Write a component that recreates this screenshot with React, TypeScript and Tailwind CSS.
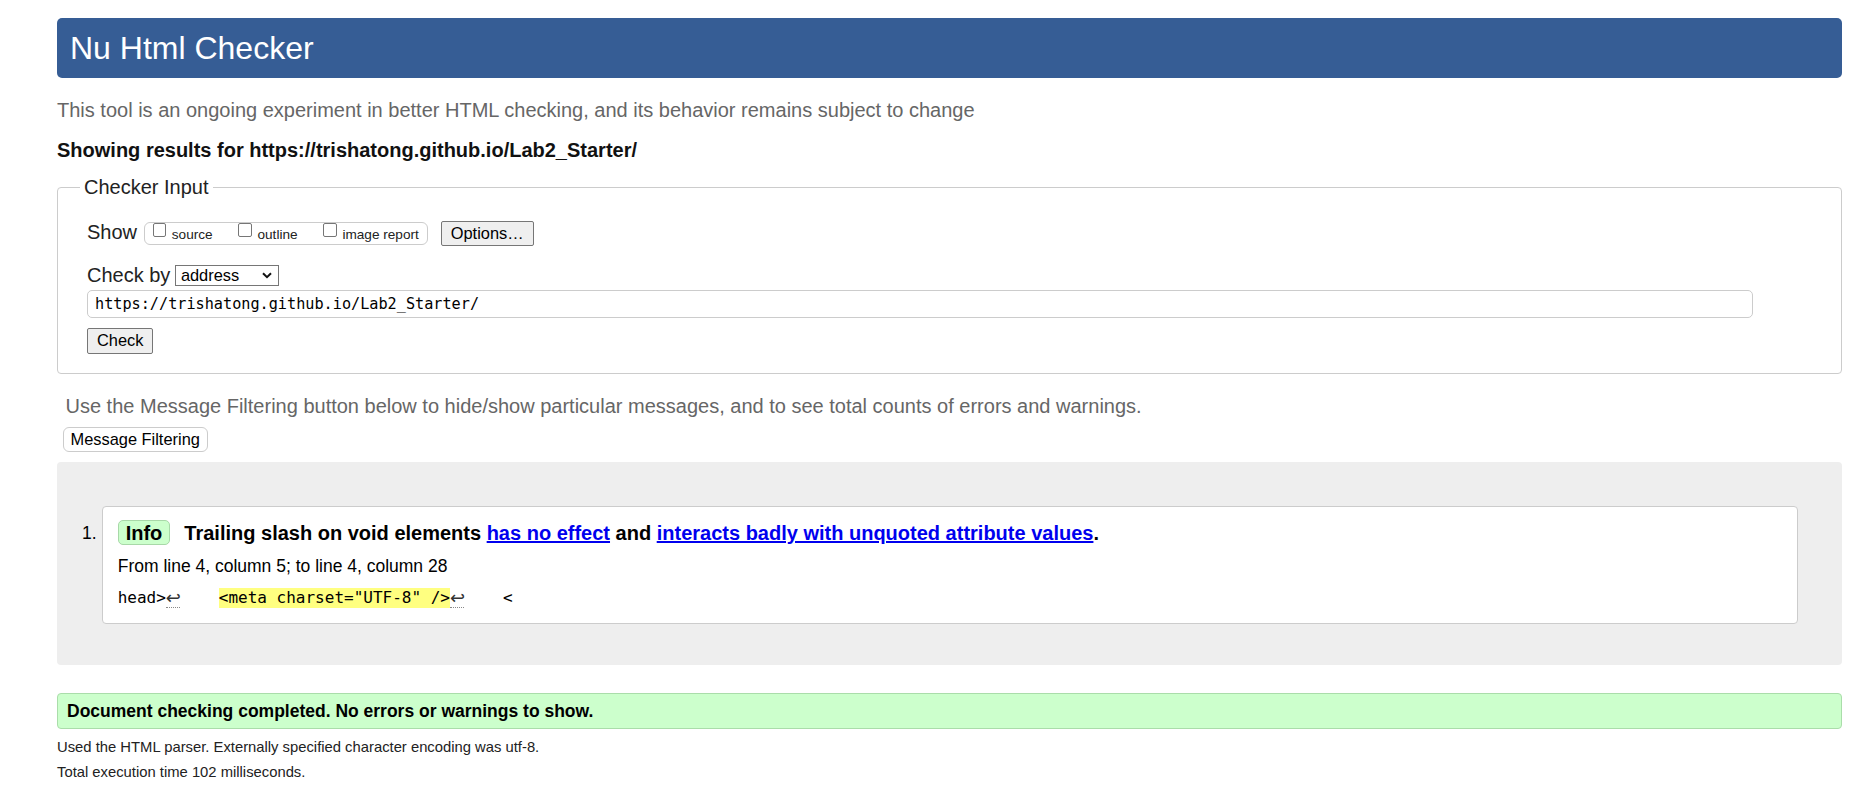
import React from "react";

function Checkbox({ label }: { label: string }) {
  return (
    <label className="flex items-start">
      <input
        type="checkbox"
        className="m-0 h-[13.7px] w-[13.7px] appearance-none rounded-[2px] border border-[#767676] bg-white"
      />
      <span className="ml-[5.6px] mt-[1.5px] text-[13.6px] leading-[20px] text-[#222]">{label}</span>
    </label>
  );
}

function Ret() {
  return (
    <span className="inline-block h-[20px] w-[14.4px] border-b border-dotted border-[#888] text-center font-['DejaVu_Sans',sans-serif] text-[18px] leading-[20px] text-[#333]">
      ↩
    </span>
  );
}

export default function App() {
  return (
    <div className="min-h-[787px] bg-white pl-[57px] pr-[20px] pt-[18px] font-['Liberation_Sans','Arial',sans-serif] text-black">
      <header className="h-[60px] rounded-[5px] bg-[#365d95] pl-[13px] text-[32px] leading-[60px] text-white">
        Nu Html Checker
      </header>

      <p className="mt-[20px] text-[20px] leading-[24px] text-[#666]">
        This tool is an ongoing experiment in better HTML checking, and its behavior remains subject to change
      </p>
      <p className="mt-[16px] text-[20px] font-bold leading-[24px] text-[#111]">
        Showing results for https://trishatong.github.io/Lab2_Starter/
      </p>

      <fieldset className="mt-[13px] rounded-[4px] border border-[#ccc] pb-[19px] pl-[22px] pt-[21.6px]">
        <legend className="px-[4px] text-[20px] leading-[24px] text-[#222]">Checker Input</legend>
        <div className="pl-[7px]">
          <div className="flex h-[26px] items-center">
            <span className="mb-[3px] text-[20px] leading-[23px] text-[#222]">Show</span>
            <div className="ml-[6.5px] flex h-[23px] items-start gap-[25.6px] rounded-[6px] border border-[#ccc] px-[8px]">
              <Checkbox label="source" />
              <Checkbox label="outline" />
              <Checkbox label="image report" />
            </div>
            <button className="ml-[13px] h-[25px] rounded-[2px] border border-[#767676] bg-[#efefef] px-[9px] text-[16.4px] leading-[23px] text-black">
              Options…
            </button>
          </div>

          <div className="mt-[16px] flex items-start">
            <span className="text-[20px] leading-[24px] text-[#222]">Check by</span>
            <div className="relative ml-[4.5px] mt-[2px]">
              <select className="block h-[21.7px] w-[104px] appearance-none rounded-none border border-[#767676] bg-white py-0 pl-[5px] text-[16.4px] leading-[19px] text-black">
                <option>address</option>
              </select>
              <svg
                className="pointer-events-none absolute right-[6.5px] top-[7.5px]"
                width="10"
                height="7"
                viewBox="0 0 10 7"
              >
                <path d="M1 1.2 L5 5.2 L9 1.2" fill="none" stroke="#111" strokeWidth="2" />
              </svg>
            </div>
          </div>

          <input
            readOnly
            value="https://trishatong.github.io/Lab2_Starter/"
            className="mt-[3px] block h-[28px] w-[1666px] rounded-[5px] border border-[#ccc] bg-white pl-[7px] font-['DejaVu_Sans_Mono',monospace] text-[15.2px] text-black outline-none"
          />

          <button className="mt-[10px] block h-[26px] rounded-[2px] border border-[#767676] bg-[#efefef] px-[9px] text-[16.4px] leading-[23px] text-black">
            Check
          </button>
        </div>
      </fieldset>

      <p className="mt-[20px] pl-[8.5px] text-[20px] leading-[24px] text-[#666]">
        Use the Message Filtering button below to hide/show particular messages, and to see total counts of errors and warnings.
      </p>
      <div className="mt-[9px] pl-[5.5px]">
        <button className="h-[25px] rounded-[6px] border border-[#ccc] bg-white px-[7px] text-[16.4px] leading-[23px] text-black">
          Message Filtering
        </button>
      </div>

      <div className="mt-[10px] rounded-[4px] bg-[#eeeeee] pb-[41.6px] pl-[25px] pr-[44px] pt-[44px]">
        <div className="flex items-start">
          <span className="mt-[15.6px] w-[19.7px] shrink-0 text-[17.5px] leading-[25px]">1.</span>
          <div className="flex-1 rounded-[4px] border border-[#ccc] bg-white pb-[14.4px] pl-[15px] pt-[13.6px]">
            <div className="flex h-[25px] items-center">
              <span className="flex h-[25px] items-center rounded-[5px] border border-[#a8d8a8] bg-[#ccffcc] px-[7px] text-[20px] font-bold">
                Info
              </span>
              <span className="ml-[14px] text-[20px] font-bold">
                Trailing slash on void elements{" "}
                <a href="#" className="text-[#0000ee] underline">
                  has no effect
                </a>{" "}
                and{" "}
                <a href="#" className="text-[#0000ee] underline">
                  interacts badly with unquoted attribute values
                </a>
                .
              </span>
            </div>
            <p className="mt-[8px] text-[17.5px] leading-[26px]">From line 4, column 5; to line 4, column 28</p>
            <div className="mt-[9px] flex h-[20px] items-start whitespace-pre font-['DejaVu_Sans_Mono',monospace] text-[16px] leading-[20px] text-black">
              <span>head&gt;</span>
              <Ret />
              <span>{"    "}</span>
              <span className="h-[20px] bg-[#ffff80]">{'<meta charset="UTF-8" />'}</span>
              <Ret />
              <span>{"    <"}</span>
            </div>
          </div>
        </div>
      </div>

      <div className="mt-[27.4px] h-[36px] rounded-[4px] border border-[#aaddaa] bg-[#ccffcc] pl-[9px] text-[17.5px] font-bold leading-[34px]">
        Document checking completed. No errors or warnings to show.
      </div>

      <div className="mt-[6.4px] text-[14.8px] leading-[25px] text-[#222]">
        <p>Used the HTML parser. Externally specified character encoding was utf-8.</p>
        <p>Total execution time 102 milliseconds.</p>
      </div>
    </div>
  );
}
